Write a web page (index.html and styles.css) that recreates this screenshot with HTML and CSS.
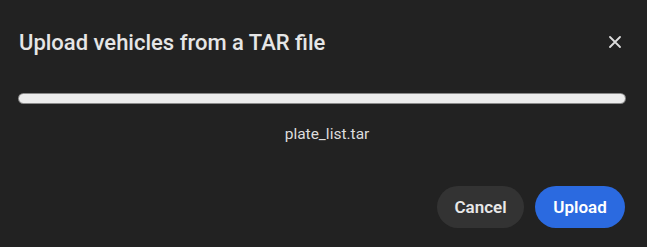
FILE: index.html
```html
<!DOCTYPE html>
<html lang="en">
<head>
    <meta charset="UTF-8" />
    <title>Upload vehicles</title>
    <link rel="stylesheet" href="styles.css">
</head>
<body>
    <div class="dialog">
        <div class="dialog-header">
            <h1 class="dialog-title">Upload vehicles from a TAR file</h1>
            <button class="close-btn" aria-label="Close">
                <svg width="12" height="12" viewBox="0 0 12 12">
                    <path d="M1 1 L11 11 M11 1 L1 11" stroke="#dcdcdc" stroke-width="1.8" stroke-linecap="round" />
                </svg>
            </button>
        </div>

        <div class="progress">
            <div class="progress-fill"></div>
        </div>
        <p class="file-name">plate_list.tar</p>

        <div class="dialog-actions">
            <button class="btn btn-cancel">Cancel</button>
            <button class="btn btn-upload">Upload</button>
        </div>
    </div>
</body>
</html>
```

FILE: styles.css
```css
body {
    margin: 0;
    padding: 0;
    background-color: #222222;
    font-family: Roboto, "Liberation Sans", Arial, sans-serif;
}

.dialog {
    width: 647px;
    height: 247px;
    box-sizing: border-box;
    padding: 26px 21px 0 18px;
}

.dialog-header {
    display: flex;
    align-items: center;
    justify-content: space-between;
    height: 32px;
}

.dialog-title {
    margin: 0 0 0 1px;
    font-size: 22px;
    font-weight: 500;
    color: #e6e6e6;
}

.close-btn {
    width: 32px;
    height: 32px;
    margin-right: -5px;
    background: none;
    border: none;
    padding: 0;
    display: flex;
    align-items: center;
    justify-content: center;
    cursor: pointer;
}

.progress {
    margin-top: 35px;
    height: 11px;
    border-radius: 6px;
    background-color: #8a8a8a;
    padding: 1px;
    box-sizing: border-box;
}

.progress-fill {
    width: 100%;
    height: 100%;
    border-radius: 5px;
    background-color: #ececec;
}

.file-name {
    margin: 21px 0 0;
    padding-left: 10px;
    text-align: center;
    font-size: 15.5px;
    color: #dddddd;
}

.dialog-actions {
    display: flex;
    justify-content: flex-end;
    gap: 11px;
    margin-top: 43px;
    padding-right: 1px;
}

.btn {
    height: 42px;
    border: none;
    border-radius: 21px;
    font-family: inherit;
    font-size: 17px;
    font-weight: 600;
    cursor: pointer;
}

.btn-cancel {
    width: 87px;
    background-color: #333333;
    color: #e8e8e8;
}

.btn-upload {
    width: 90px;
    background-color: #2b6ae0;
    color: #ffffff;
}
```
